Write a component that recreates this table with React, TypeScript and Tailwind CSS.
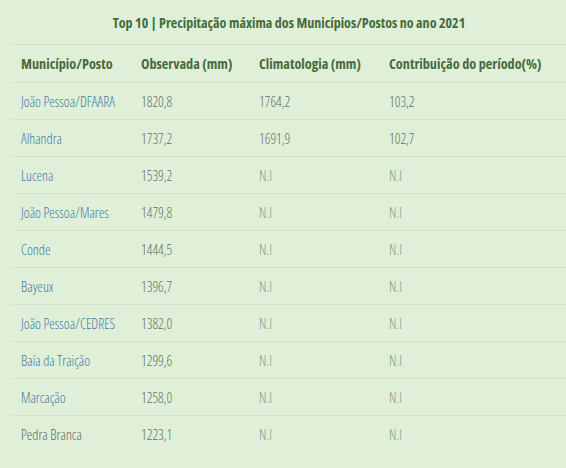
const rows = [
  { nome: "João Pessoa/DFAARA", obs: "1820,8", clim: "1764,2", contrib: "103,2", link: true },
  { nome: "Alhandra", obs: "1737,2", clim: "1691,9", contrib: "102,7", link: true },
  { nome: "Lucena", obs: "1539,2", clim: "N.I", contrib: "N.I", link: true },
  { nome: "João Pessoa/Mares", obs: "1479,8", clim: "N.I", contrib: "N.I", link: true },
  { nome: "Conde", obs: "1444,5", clim: "N.I", contrib: "N.I", link: true },
  { nome: "Bayeux", obs: "1396,7", clim: "N.I", contrib: "N.I", link: true },
  { nome: "João Pessoa/CEDRES", obs: "1382,0", clim: "N.I", contrib: "N.I", link: true },
  { nome: "Baía da Traição", obs: "1299,6", clim: "N.I", contrib: "N.I", link: true },
  { nome: "Marcação", obs: "1258,0", clim: "N.I", contrib: "N.I", link: true },
  { nome: "Pedra Branca", obs: "1223,1", clim: "N.I", contrib: "N.I", link: false },
];

// célula com cor diferente quando o valor não foi informado
function Valor({ v, w }: { v: string; w: string }) {
  const cor = v === "N.I" ? "text-[#8c9c8a]" : "text-[#667266]";
  return <div className={`${w} ${cor}`}>{v}</div>;
}

export default function App() {
  return (
    <div className="w-[566px] h-[468px] bg-[#dfefd8] pl-[12px] font-['Open_Sans',sans-serif] font-stretch-[75%] overflow-hidden">
      <div className="h-[45px] flex items-center justify-center border-b border-[#d2e1cb] text-[14px] font-bold text-[#476b3c]">
        Top 10 | Precipitação máxima dos Municípios/Postos no ano 2021
      </div>
      <div className="h-[38px] flex items-center pl-[9px] border-b border-[#d2e1cb] text-[14.2px] font-bold text-[#476b3c]">
        <div className="w-[120px]">Município/Posto</div>
        <div className="w-[118px]">Observada (mm)</div>
        <div className="w-[130px]">Climatologia (mm)</div>
        <div>Contribuição do período(%)</div>
      </div>
      {rows.map((r, i) => (
        <div
          key={r.nome}
          className={`h-[37px] flex items-center pl-[9px] text-[14px] font-light ${i < rows.length - 1 ? "border-b border-[#d2e1cb]" : ""}`}
        >
          <div className={`w-[120px] ${r.link ? "text-[#3f7cac]" : "text-[#5f6d5f]"}`}>{r.nome}</div>
          <Valor v={r.obs} w="w-[118px]" />
          <Valor v={r.clim} w="w-[130px]" />
          <Valor v={r.contrib} w="" />
        </div>
      ))}
    </div>
  );
}
